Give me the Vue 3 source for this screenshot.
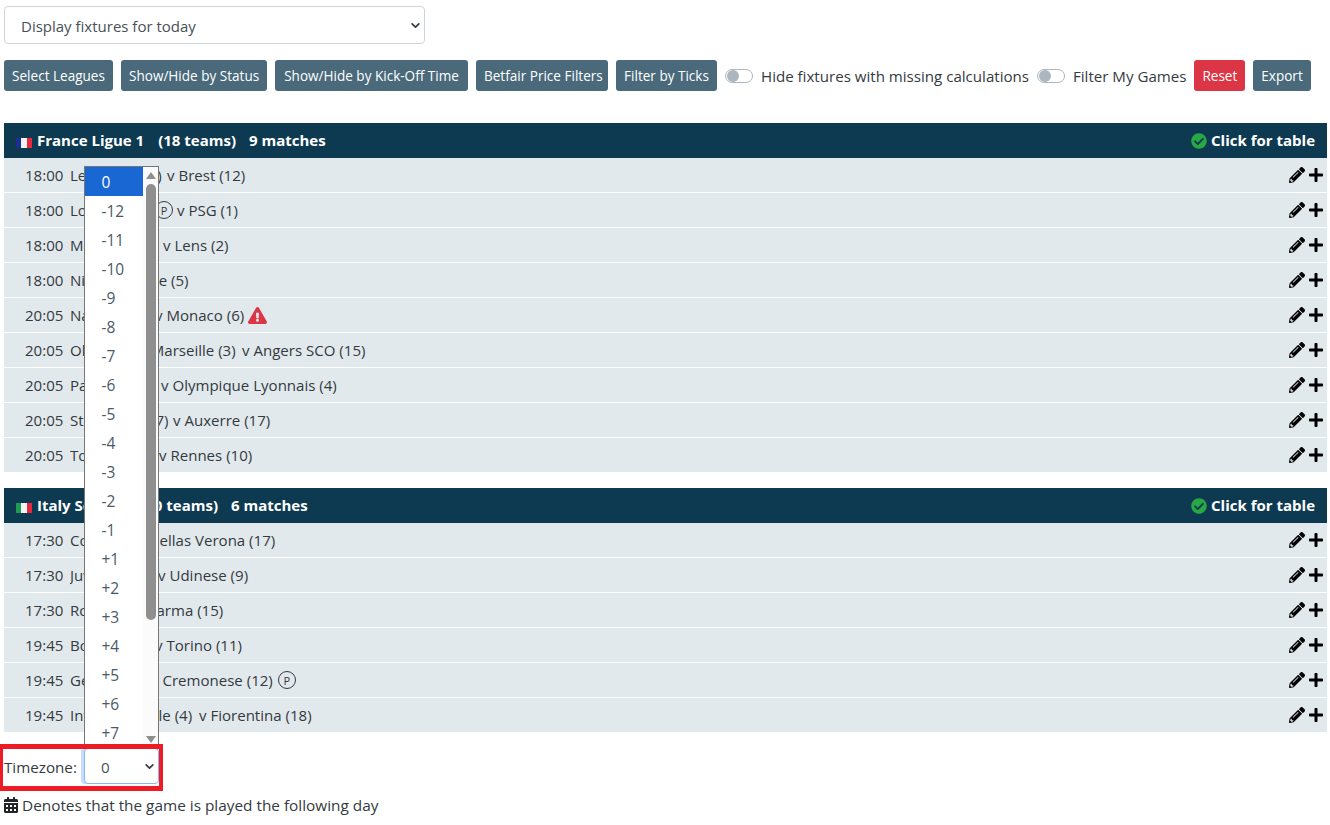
<script setup>
const chevron = "url(\"data:image/svg+xml,%3csvg xmlns='http://www.w3.org/2000/svg' viewBox='0 0 16 16'%3e%3cpath fill='none' stroke='%23343a40' stroke-linecap='round' stroke-linejoin='round' stroke-width='3' d='M2 5l6 6 6-6'/%3e%3c/svg%3e\")"
const buttons = [
  { label: 'Select Leagues', w: 109 },
  { label: 'Show/Hide by Status', w: 146 },
  { label: 'Show/Hide by Kick-Off Time', w: 193 },
  { label: 'Betfair Price Filters', w: 132 },
  { label: 'Filter by Ticks', w: 101 }
]
// w: width of the home-team column of each row, the dropdown lies over most of it
const leagues = [
  { name: 'France Ligue 1', teams: 18, count: 9, flag: ['#1a2f8f', '#f4f4f4', '#e8283c'], rows: [
    { t: '18:00', h: 'Le Havre (14)', a: 'Brest (12)', w: 97 },
    { t: '18:00', h: 'Lorient (13)', a: 'PSG (1)', w: 85, pHome: true },
    { t: '18:00', h: 'Metz (18)', a: 'Lens (2)', w: 93 },
    { t: '18:00', h: 'Nice (8)', a: 'Lille (5)', w: 58 },
    { t: '20:05', h: 'Nantes (16)', a: 'Monaco (6)', w: 85, warn: true },
    { t: '20:05', h: 'Olympique Marseille (3)', a: 'Angers SCO (15)', w: 172 },
    { t: '20:05', h: 'Paris FC (11)', a: 'Olympique Lyonnais (4)', w: 91 },
    { t: '20:05', h: 'Strasbourg (7)', a: 'Auxerre (17)', w: 103 },
    { t: '20:05', h: 'Toulouse (9)', a: 'Rennes (10)', w: 89 }
  ] },
  { name: 'Italy Serie A', teams: 20, count: 6, flag: ['#1f9a55', '#f4f4f4', '#e8283c'], rows: [
    { t: '17:30', h: 'Como (6)', a: 'Hellas Verona (17)', w: 67 },
    { t: '17:30', h: 'Juventus (7)', a: 'Udinese (9)', w: 88 },
    { t: '17:30', h: 'Roma (1)', a: 'Parma (15)', w: 66 },
    { t: '19:45', h: 'Bologna (5)', a: 'Torino (11)', w: 85 },
    { t: '19:45', h: 'Genoa (14)', a: 'Cremonese (12)', w: 81, pAway: true },
    { t: '19:45', h: 'Internazionale (4)', a: 'Fiorentina (18)', w: 129 }
  ] }
]
const zones = ['0', '-12', '-11', '-10', '-9', '-8', '-7', '-6', '-5', '-4', '-3', '-2', '-1', '+1', '+2', '+3', '+4', '+5', '+6', '+7']
</script>

<template>
  <div class="page" :style="{ '--chevron': chevron }">
    <select class="day-select"><option>Display fixtures for today</option></select>

    <div class="toolbar">
      <button v-for="b in buttons" :key="b.label" class="btn" :style="{ width: b.w + 'px' }">{{ b.label }}</button>
      <span class="switch"><i></i></span>
      <span class="switch-label">Hide fixtures with missing calculations</span>
      <span class="switch second"><i></i></span>
      <span class="switch-label">Filter My Games</span>
      <button class="btn danger">Reset</button>
      <button class="btn">Export</button>
    </div>

    <section v-for="l in leagues" :key="l.name" class="league">
      <header class="league-head">
        <span class="flag"><b :style="{ background: l.flag[0] }"></b><b :style="{ background: l.flag[1] }"></b><b :style="{ background: l.flag[2] }"></b></span>
        <span>{{ l.name }}</span>
        <span class="teams">({{ l.teams }} teams)</span>
        <span class="count">{{ l.count }} matches</span>
        <span class="table-link">
          <svg class="check" viewBox="0 0 512 512"><path d="M504 256c0 136.967-111.033 248-248 248S8 392.967 8 256 119.033 8 256 8s248 111.033 248 248zM227.314 387.314l184-184c6.248-6.248 6.248-16.379 0-22.627l-22.627-22.627c-6.248-6.249-16.379-6.249-22.628 0L216 308.118l-70.059-70.059c-6.248-6.248-16.379-6.248-22.628 0l-22.627 22.627c-6.248 6.248-6.248 16.379 0 22.627l104 104c6.249 6.249 16.379 6.249 22.628.001z"/></svg>
          Click for table
        </span>
      </header>
      <div v-for="r in l.rows" :key="r.h" class="row">
        <span class="time">{{ r.t }}</span>
        <span class="fixture">
          <span class="home" :style="{ width: r.w + 'px' }">{{ r.h }}</span>
          <span v-if="r.pHome" class="p before">P</span>
          <span>v {{ r.a }}</span>
          <span v-if="r.pAway" class="p after">P</span>
          <svg v-if="r.warn" class="warn" viewBox="0 0 576 512"><path d="M569.517 440.013C587.975 472.007 564.806 512 527.94 512H48.054c-36.937 0-59.999-40.055-41.577-71.987L246.423 24.035c18.467-32.009 64.72-31.951 83.154 0l239.94 416.978zM288 354c-25.405 0-46 20.595-46 46s20.595 46 46 46 46-20.595 46-46-20.595-46-46-46zm-43.673-165.346l7.418 136c.347 6.364 5.609 11.346 11.982 11.346h48.546c6.373 0 11.635-4.982 11.982-11.346l7.418-136c.375-6.874-5.098-12.654-11.982-12.654h-63.383c-6.884 0-12.356 5.78-11.981 12.654z"/></svg>
        </span>
        <span class="actions">
          <svg class="pencil" viewBox="0 0 512 512"><path d="M497.9 142.1l-46.1 46.1c-4.7 4.7-12.3 4.7-17 0l-111-111c-4.7-4.7-4.7-12.3 0-17l46.1-46.1c18.7-18.7 49.1-18.7 67.9 0l60.1 60.1c18.8 18.7 18.8 49.1 0 67.9zM284.2 99.8L21.6 362.4.4 483.9c-2.9 16.4 11.4 30.6 27.8 27.8l121.5-21.3 262.6-262.6c4.7-4.7 4.7-12.3 0-17l-111-111c-4.8-4.7-12.4-4.7-17.1 0zM124.1 339.9c-5.5-5.5-5.5-14.3 0-19.8l154-154c5.5-5.5 14.3-5.5 19.8 0s5.5 14.3 0 19.8l-154 154c-5.5 5.5-14.3 5.5-19.8 0zM88 424h48v36.3l-64.5 11.3-31.1-31.1L51.7 376H88v48z"/></svg>
          <svg class="plus" viewBox="0 0 448 512"><path d="M416 208H272V64c0-17.67-14.33-32-32-32h-32c-17.67 0-32 14.33-32 32v144H32c-17.67 0-32 14.33-32 32v32c0 17.67 14.33 32 32 32h144v144c0 17.67 14.33 32 32 32h32c17.67 0 32-14.33 32-32V304h144c17.67 0 32-14.33 32-32v-32c0-17.67-14.33-32-32-32z"/></svg>
        </span>
      </div>
    </section>

    <div class="tz">
      <label>Timezone:</label>
      <select class="tz-select"><option>0</option></select>
    </div>

    <p class="note">
      <svg class="cal" viewBox="0 0 448 512"><path d="M0 464c0 26.5 21.5 48 48 48h352c26.5 0 48-21.5 48-48V192H0v272zm320-196c0-6.6 5.4-12 12-12h40c6.6 0 12 5.4 12 12v40c0 6.6-5.4 12-12 12h-40c-6.6 0-12-5.4-12-12v-40zm0 128c0-6.6 5.4-12 12-12h40c6.6 0 12 5.4 12 12v40c0 6.6-5.4 12-12 12h-40c-6.6 0-12-5.4-12-12v-40zM192 268c0-6.6 5.4-12 12-12h40c6.6 0 12 5.4 12 12v40c0 6.6-5.4 12-12 12h-40c-6.6 0-12-5.4-12-12v-40zm0 128c0-6.6 5.4-12 12-12h40c6.6 0 12 5.4 12 12v40c0 6.6-5.4 12-12 12h-40c-6.6 0-12-5.4-12-12v-40zM64 268c0-6.6 5.4-12 12-12h40c6.6 0 12 5.4 12 12v40c0 6.6-5.4 12-12 12H76c-6.6 0-12-5.4-12-12v-40zm0 128c0-6.6 5.4-12 12-12h40c6.6 0 12 5.4 12 12v40c0 6.6-5.4 12-12 12H76c-6.6 0-12-5.4-12-12v-40zM400 64h-48V16c0-8.8-7.2-16-16-16h-32c-8.8 0-16 7.2-16 16v48H160V16c0-8.8-7.2-16-16-16h-32c-8.8 0-16 7.2-16 16v48H48C21.5 64 0 85.5 0 112v48h448v-48c0-26.5-21.5-48-48-48z"/></svg>
      Denotes that the game is played the following day
    </p>

    <div class="dropdown">
      <div class="options">
        <div v-for="(z, i) in zones" :key="z" class="option" :class="{ selected: i === 0 }">{{ z }}</div>
      </div>
      <div class="scrollbar">
        <span class="arrow up"></span>
        <span class="thumb"></span>
        <span class="arrow down"></span>
      </div>
    </div>

    <div class="annotation"></div>
  </div>
</template>

<style>
html, body { margin: 0; background: #fff; }
</style>

<style scoped>
.page {
  position: relative;
  box-sizing: border-box;
  width: 1330px;
  height: 825px;
  overflow: hidden;
  padding: 6px 3px 0 4px;
  font-family: "Open Sans", "Noto Sans", sans-serif;
  font-size: 15.2px;
  color: #212529;
}
select {
  appearance: none;
  box-sizing: border-box;
  display: block;
  font: inherit;
  color: #495057;
  background: #fff var(--chevron) no-repeat right 3px center / 11px 9px;
  border: 1px solid #ced4da;
  border-radius: 4px;
  outline: none;
}
.day-select {
  width: 421px;
  height: 38px;
  padding: 2px 30px 0 16px;
  font-size: 15px;
}
.toolbar {
  display: flex;
  align-items: center;
  height: 31px;
  margin-top: 16px;
  gap: 8px;
}
.btn {
  flex: none;
  height: 31px;
  padding: 0 8px;
  border: 0;
  border-radius: 3px;
  background: #4a6a7b;
  color: #fff;
  font: inherit;
  font-size: 13.55px;
  white-space: nowrap;
}
.btn.danger { background: #dc3545; }
.switch {
  position: relative;
  box-sizing: border-box;
  width: 28px;
  height: 14px;
  border: 1px solid #adb5bd;
  border-radius: 7px;
  background: #fff;
  flex: none;
}
.switch i {
  position: absolute;
  left: 1px;
  top: 0;
  width: 12px;
  height: 12px;
  border-radius: 50%;
  background: #adb5bd;
}
.switch-label { white-space: nowrap; color: #343a40; font-size: 15.1px; }
.league { margin-bottom: 16px; }
.toolbar + .league { margin-top: 32px; }
.league-head {
  display: flex;
  align-items: center;
  box-sizing: border-box;
  height: 35px;
  padding: 0 12px 2px;
  background: #0d3a51;
  color: #fff;
  font-size: 15px;
  font-weight: 700;
}
.flag {
  display: flex;
  width: 16px;
  height: 10px;
  margin: 7px 5px 0 0;
}
.flag b { flex: 1; }
.teams { margin-left: 14px; }
.count { margin-left: 13px; }
.table-link {
  display: flex;
  align-items: center;
  gap: 4px;
  margin-left: auto;
}
.check { width: 16px; height: 16px; fill: #28a745; margin-top: 2px; }
.row {
  display: flex;
  align-items: center;
  box-sizing: border-box;
  height: 35px;
  padding: 0 4px 0 21px;
  background: #e2e9ed;
  border-bottom: 1px solid #fff;
  color: #343a40;
  font-size: 15.05px;
}
.row:last-child { height: 34px; border-bottom: 0; }
.time { width: 45px; flex: none; }
.fixture { display: flex; align-items: center; }
.home { flex: none; white-space: nowrap; overflow: hidden; }
.p {
  box-sizing: border-box;
  display: inline-flex;
  align-items: center;
  justify-content: center;
  flex: none;
  width: 18px;
  height: 18px;
  border: 1px solid #343a40;
  border-radius: 50%;
  font-size: 11px;
  line-height: 1;
}
.p.before { margin-right: 4px; }
.p.after { margin-left: 5px; }
.warn { width: 19px; height: 17px; fill: #dc3545; margin-left: 4px; }
.actions { display: flex; align-items: center; gap: 4px; margin-left: auto; color: #000; }
.pencil { width: 16px; height: 16px; fill: #000; }
.plus { width: 14px; height: 16px; fill: #000; }
.tz {
  display: flex;
  align-items: center;
  gap: 7px;
  height: 36px;
  margin-top: 1px;
}
.tz label { color: #343a40; padding-top: 2px; }
.tz-select {
  width: 75px;
  height: 36px;
  padding: 2px 20px 0 16px;
  border-color: #86b7fe;
  box-shadow: -3px 0 0 0 #c5dcfb;
}
.note {
  display: flex;
  align-items: center;
  gap: 4px;
  margin: 11px 0 0;
  color: #343a40;
  font-size: 15.35px;
}
.cal { width: 14px; height: 16px; fill: #212529; }
.dropdown {
  position: absolute;
  left: 84px;
  top: 166px;
  display: flex;
  box-sizing: border-box;
  width: 75px;
  height: 580px;
  overflow: hidden;
  background: #fff;
  border: 1px solid #767676;
  border-bottom: 0;
}
.options { flex: 1; min-width: 0; }
.option {
  box-sizing: border-box;
  height: 29px;
  line-height: 30px;
  padding-left: 16.5px;
  font-size: 15.5px;
  color: #4c5a66;
}
.option.selected { background: #1967d2; color: #fff; }
.scrollbar {
  position: relative;
  flex: none;
  width: 15px;
  background: #fbfbfb;
}
.thumb {
  position: absolute;
  left: 3px;
  top: 17px;
  width: 10px;
  height: 436px;
  border-radius: 5px;
  background: #8f8f8f;
}
.arrow {
  position: absolute;
  left: 3px;
  border-left: 5px solid transparent;
  border-right: 5px solid transparent;
}
.arrow.up { top: 5px; border-bottom: 7px solid #8f8f8f; }
.arrow.down { top: 569px; border-top: 7px solid #8f8f8f; }
.annotation {
  position: absolute;
  left: 0;
  top: 744px;
  box-sizing: border-box;
  width: 163px;
  height: 47px;
  border: 5px solid #ed1c24;
  border-left-width: 3px;
  border-right-width: 4px;
}
</style>
